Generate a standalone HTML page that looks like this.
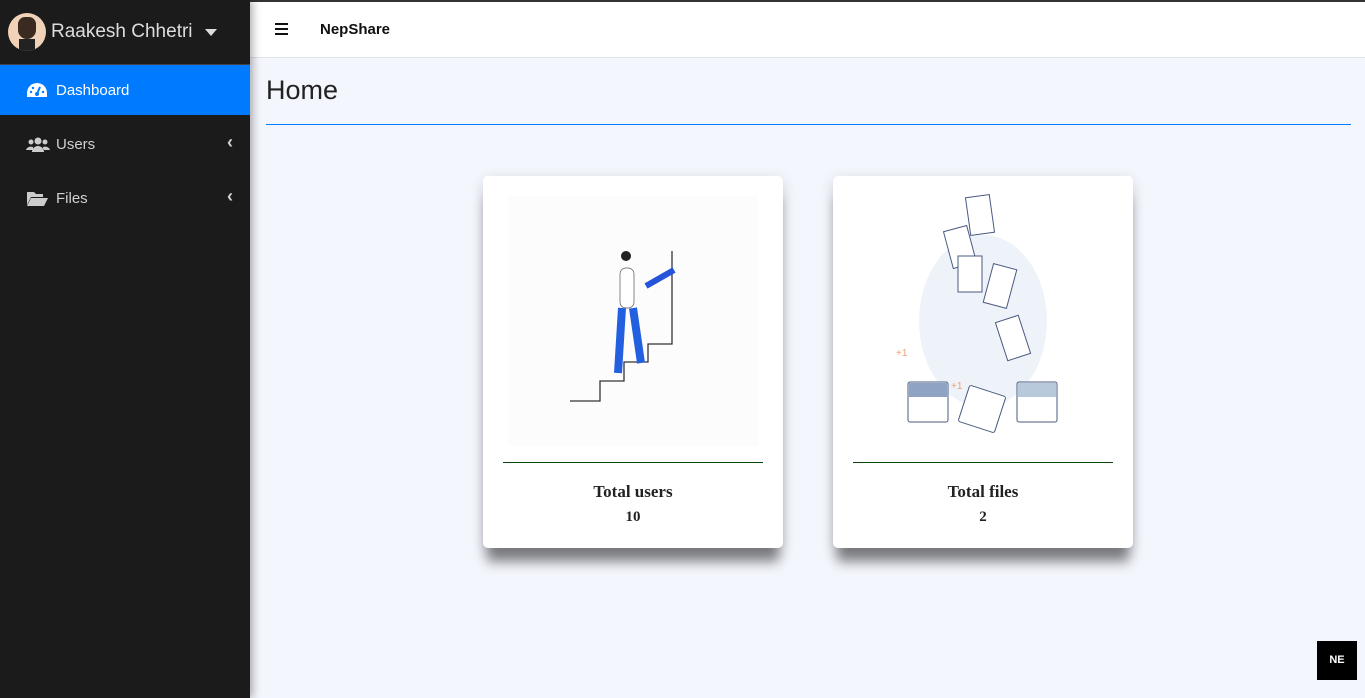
<!DOCTYPE html>
<html><head><style>
*{margin:0;padding:0;box-sizing:border-box}
body{width:1365px;height:698px;overflow:hidden;background:#f4f6fd;font-family:"Liberation Sans",sans-serif;position:relative}
.top{position:absolute;left:0;top:0;width:1365px;height:2px;background:#333}
.side{position:absolute;left:0;top:0;width:250px;height:698px;background:#1b1b1b;box-shadow:3px 0 8px rgba(0,0,0,.3)}
.user{height:65px;border-bottom:1px solid #444;display:flex;align-items:center;padding-left:8px;color:#ddd;font-size:19px}
.av{width:38px;height:38px;border-radius:50%;background:#f0d2b8;margin-right:5px;position:relative;overflow:hidden}
.item{height:50px;display:flex;align-items:center;padding-left:56px;color:#d0d0d0;font-size:15px;position:relative}
.item.act{background:#007bff;color:#fff}
.ic{position:absolute;left:26px;top:17px}
.chev{position:absolute;right:17px;top:13px;font-size:18px;font-weight:bold}
.nav{position:absolute;left:250px;top:2px;right:0;height:56px;background:#fff;border-bottom:1px solid #dee2e6}
.card{position:absolute;top:176px;width:300px;height:372px;background:#fff;border-radius:5px;box-shadow:0 18px 12px -4px rgba(0,0,0,.45),0 4px 14px rgba(0,0,0,.15)}
.card hr{position:absolute;left:20px;right:20px;top:286px;border:0;border-top:1px solid #0a4a0a}
.t{position:absolute;top:306px;width:100%;text-align:center;font-family:"Liberation Serif",serif;font-weight:bold;font-size:17px;color:#222}
.n{position:absolute;top:333px;width:100%;text-align:center;font-family:"Liberation Serif",serif;font-weight:bold;font-size:15px;color:#222}
</style></head><body>
<div class="top"></div>
<div class="nav">
<div style="position:absolute;left:25px;top:21px;width:13px">
<div style="height:2px;background:#111;margin-bottom:3px"></div><div style="height:2px;background:#111;margin-bottom:3px"></div><div style="height:2px;background:#111"></div></div>
<div style="position:absolute;left:70px;top:19px;font-weight:bold;font-size:15px;color:#111">NepShare</div>
</div>
<div class="side">
<div class="user"><div class="av"><div style="position:absolute;left:10px;top:4px;width:18px;height:22px;background:#3a2a20;border-radius:8px 8px 10px 10px"></div><div style="position:absolute;left:11px;top:26px;width:16px;height:14px;background:#222"></div></div>Raakesh Chhetri<svg style="margin-left:12px" width="12" height="7"><path d="M0 0h12L6 7z" fill="#ddd"/></svg></div>
<div class="item act"><svg class="ic" width="22" height="17" viewBox="0 0 22 17"><path d="M11 1A10 10 0 0 0 1 11v4h20v-4A10 10 0 0 0 11 1z" fill="#fff"/><circle cx="11" cy="12" r="2" fill="#007bff"/><path d="M11 12l3-7" stroke="#007bff" stroke-width="2"/><circle cx="5" cy="10" r="1.2" fill="#007bff"/><circle cx="7" cy="6" r="1.2" fill="#007bff"/><circle cx="17" cy="10" r="1.2" fill="#007bff"/></svg>Dashboard</div>
<div style="height:4px"></div>
<div class="item"><svg class="ic" width="24" height="17" viewBox="0 0 24 17"><circle cx="12" cy="5" r="3.5" fill="#ccc"/><circle cx="5" cy="6" r="2.5" fill="#ccc"/><circle cx="19" cy="6" r="2.5" fill="#ccc"/><path d="M6 16a6 6 0 0 1 12 0zM0 14a5 4 0 0 1 7-3v3zM24 14a5 4 0 0 0-7-3v3z" fill="#ccc"/></svg>Users<span class="chev">‹</span></div>
<div style="height:4px"></div>
<div class="item"><svg class="ic" width="22" height="17" viewBox="0 0 22 17"><path d="M1 2h7l2 2h7v3H5L1 15z" fill="#ccc"/><path d="M5 8h17l-4 8H1z" fill="#ccc"/></svg>Files<span class="chev">‹</span></div>
</div>
<div style="position:absolute;left:266px;top:75px;font-size:27px;color:#222">Home</div>
<div style="position:absolute;left:266px;top:124px;width:1085px;height:1px;background:#007bff"></div>
<div class="card" style="left:483px">
<div style="position:absolute;left:25px;top:20px;width:250px;height:250px;background:#fbfcfb"></div>
<svg style="position:absolute;left:25px;top:20px" width="250" height="250">
<path d="M62 205h30v-20h24v-19h24v-18h24V55" stroke="#333" fill="none" stroke-width="1.3"/>
<path d="M138 90l28-16" stroke="#2455d9" stroke-width="6"/>
<rect x="112" y="72" width="14" height="40" rx="6" fill="#fff" stroke="#555" stroke-width=".7"/>
<path d="M114 112l-4 65M125 112l8 55" stroke="#2260e0" stroke-width="8"/>
<circle cx="118" cy="60" r="5" fill="#222"/>
</svg>
<hr><div class="t">Total users</div><div class="n">10</div></div>
<div class="card" style="left:833px">
<svg style="position:absolute;left:0;top:0" width="300" height="280">
<ellipse cx="150" cy="145" rx="64" ry="86" fill="#eef2f9"/>
<g fill="#fff" stroke="#4a5a80" stroke-width="1">
<rect x="135" y="20" width="24" height="38" transform="rotate(-8 147 39)"/>
<rect x="115" y="52" width="24" height="38" transform="rotate(-15 127 71)"/>
<rect x="125" y="80" width="24" height="36"/>
<rect x="155" y="90" width="24" height="40" transform="rotate(15 167 110)"/>
<rect x="168" y="142" width="24" height="40" transform="rotate(-18 180 162)"/>
<rect x="75" y="206" width="40" height="40" rx="2"/>
<rect x="130" y="214" width="38" height="38" rx="2" transform="rotate(18 149 233)"/>
<rect x="184" y="206" width="40" height="40" rx="2"/>
</g>
<rect x="76" y="207" width="38" height="14" fill="#8fa4c4"/><rect x="185" y="207" width="38" height="14" fill="#b8c9dc"/>
<text x="63" y="180" font-size="10" fill="#f0a070">+1</text><text x="118" y="213" font-size="10" fill="#f0a070">+1</text>
</svg>
<hr><div class="t">Total files</div><div class="n">2</div></div>
<div style="position:absolute;left:1317px;top:641px;width:40px;height:39px;background:#000;color:#fff;font-size:11px;font-weight:bold;text-align:center;line-height:39px">NE</div>
</body></html>
